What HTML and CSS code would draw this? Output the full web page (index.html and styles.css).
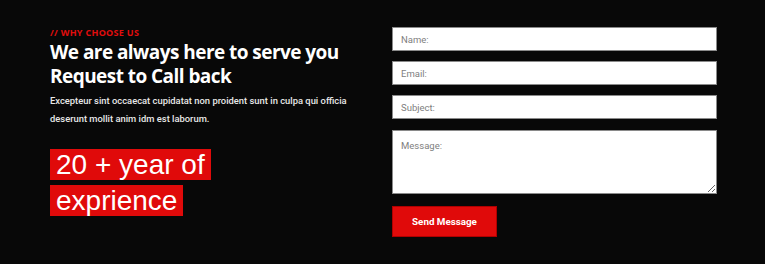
FILE: index.html
```html
<!DOCTYPE html>
<html lang="en">
<head>
<meta charset="utf-8">
<title>Request to Call back</title>
<link rel="stylesheet" href="styles.css">
</head>
<body>
<section class="callback">
  <div class="intro">
    <p class="eyebrow">// Why choose us</p>
    <h2 class="title">We are always here to serve you<br>Request to Call back</h2>
    <p class="lead">Excepteur sint occaecat cupidatat non proident sunt in culpa qui officia deserunt mollit anim idm est laborum.</p>
    <p class="badge"><span>20 + year of</span><br><span>exprience</span></p>
  </div>
  <form class="form">
    <input class="field" type="text" placeholder="Name:">
    <input class="field" type="email" placeholder="Email:">
    <input class="field" type="text" placeholder="Subject:">
    <textarea class="field area" placeholder="Message:"></textarea>
    <button class="send" type="button">Send Message</button>
  </form>
</section>
</body>
</html>
```

FILE: styles.css
```css
* { box-sizing: border-box; }
html, body { margin: 0; padding: 0; }
body {
  background: #080808;
  width: 765px;
  height: 264px;
  overflow: hidden;
  font-family: "Open Sans", sans-serif;
}
.callback {
  display: flex;
  padding: 27px 0 0 50px;
  gap: 12px;
}
.intro { width: 330px; }
.eyebrow {
  margin: 0;
  padding-top: 1px;
  color: #e20d0d;
  font-size: 9px;
  font-weight: 700;
  line-height: 10px;
  text-transform: uppercase;
  letter-spacing: 0.3px;
}
.title {
  margin: 2px 0 0;
  color: #ffffff;
  font-family: "Open Sans", sans-serif;
  font-size: 19px;
  font-weight: 700;
  line-height: 24px;
  letter-spacing: -0.55px;
  white-space: nowrap;
}
.lead {
  margin: 4px 0 0;
  color: #e8e8e8;
  font-family: "Roboto", sans-serif;
  font-weight: 500;
  font-size: 9.4px;
  line-height: 17.5px;
  width: 312px;
}
.badge {
  margin: 20px 0 0;
  font-family: "Liberation Sans", Arial, sans-serif;
  font-size: 28px;
  line-height: 36px;
  letter-spacing: 0;
  color: #ffffff;
}
.badge span {
  background: #e00a0a;
  padding: 0 6px;
}
.form {
  width: 325px;
  display: flex;
  flex-direction: column;
  align-items: flex-start;
}
.field {
  display: block;
  width: 325px;
  height: 24px;
  margin: 0 0 10px;
  padding: 0 8px;
  border: 1px solid #8a8a8a;
  background: #ffffff;
  font-family: "Roboto", sans-serif;
  font-size: 9.5px;
  color: #333;
  outline: none;
}
.field::placeholder { color: #808080; }
.area {
  height: 64px;
  margin-top: 1px;
  padding-top: 9px;
  resize: vertical;
}
.send {
  margin-top: 2px;
  width: 105px;
  height: 31px;
  border: 1px solid #b00000;
  background: #e00a0a;
  color: #ffffff;
  font-family: "Roboto", sans-serif;
  font-size: 9.8px;
  font-weight: 700;
  cursor: pointer;
}
```
